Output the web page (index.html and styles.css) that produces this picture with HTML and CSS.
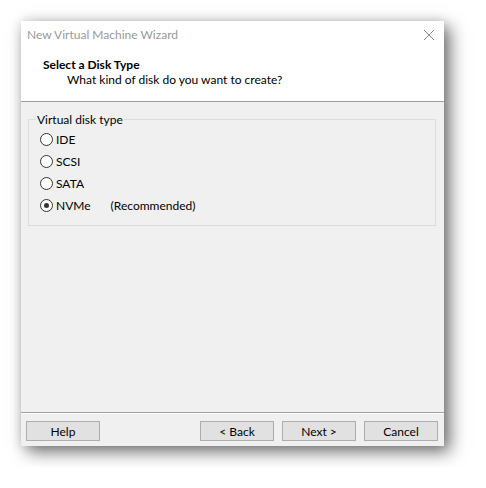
FILE: index.html
```html
<!DOCTYPE html>
<html lang="en">
<head>
  <meta charset="UTF-8" />
  <title>New Virtual Machine Wizard</title>
  <link rel="stylesheet" href="styles.css">
</head>
<body>

<div class="dialog">
  <div class="top">
    <div class="titlebar">
      <span class="title">New Virtual Machine Wizard</span>
      <svg class="close" width="12" height="12" viewBox="0 0 12 12">
        <path d="M1 1 L11 11 M11 1 L1 11" stroke="#8a8a8a" stroke-width="1" fill="none"/>
      </svg>
    </div>
    <div class="heading">
      <h1>Select a Disk Type</h1>
      <p>What kind of disk do you want to create?</p>
    </div>
  </div>

  <div class="content">
    <fieldset class="group">
      <legend>Virtual disk type</legend>
      <label class="radio"><span class="dot"></span>IDE</label>
      <label class="radio"><span class="dot"></span>SCSI</label>
      <label class="radio"><span class="dot"></span>SATA</label>
      <label class="radio checked"><span class="dot"></span>NVMe<span class="note">(Recommended)</span></label>
    </fieldset>
  </div>

  <div class="footer">
    <button class="btn">Help</button>
    <div class="spacer"></div>
    <button class="btn">&lt; Back</button>
    <button class="btn">Next &gt;</button>
    <button class="btn">Cancel</button>
  </div>
</div>

</body>
</html>
```

FILE: styles.css
```css
body {
  margin: 0;
  padding: 21px;
  background-color: white;
  font-family: Lato, "Noto Sans", sans-serif;
  font-size: 12px;
  color: #000;
}

.dialog {
  width: 423px;
  height: 425px;
  background-color: #f0f0f0;
  display: flex;
  flex-direction: column;
  box-shadow: 6px 6px 16px rgba(0, 0, 0, 0.55), 0 0 10px rgba(0, 0, 0, 0.12);
}

.top {
  background-color: white;
  border-bottom: 1px solid #a0a0a0;
  height: 80px;
}

.titlebar {
  height: 27px;
  display: flex;
  align-items: center;
  justify-content: space-between;
  padding: 0 9px 0 6px;
}

.title {
  color: #999;
  font-size: 12px;
}

.heading {
  padding-left: 22px;
  padding-top: 9px;
}

.heading h1 {
  margin: 0;
  font-size: 12px;
  font-weight: bold;
  line-height: 15px;
}

.heading p {
  margin: 0;
  padding-left: 24px;
  line-height: 16px;
}

.content {
  flex: 1;
  padding: 10px 8px 0 7px;
}

.group {
  margin: 0;
  border: 1px solid #dcdcdc;
  padding: 1px 0 3px 11px;
  height: 114px;
  box-sizing: border-box;
}

.group legend {
  padding: 0 1px;
  margin-left: -4px;
  line-height: 15px;
}

.radio {
  display: flex;
  align-items: center;
  height: 22px;
}

.dot {
  width: 11px;
  height: 11px;
  border: 1px solid #333;
  border-radius: 50%;
  background-color: white;
  margin-right: 3px;
  position: relative;
}

.checked .dot::after {
  content: "";
  position: absolute;
  left: 3px;
  top: 3px;
  width: 5px;
  height: 5px;
  border-radius: 50%;
  background-color: #333;
}

.note {
  margin-left: 20px;
}

.footer {
  border-top: 1px solid #a0a0a0;
  box-shadow: inset 0 1px 0 white;
  display: flex;
  align-items: flex-start;
  gap: 8px;
  padding: 8px 6px 5px 5px;
}

.spacer {
  flex: 1;
}

.btn {
  width: 74px;
  height: 20px;
  background-color: #e1e1e1;
  border: 1px solid #adadad;
  font-family: Lato, "Noto Sans", sans-serif;
  font-size: 12px;
  color: #000;
  padding: 0;
}
```
